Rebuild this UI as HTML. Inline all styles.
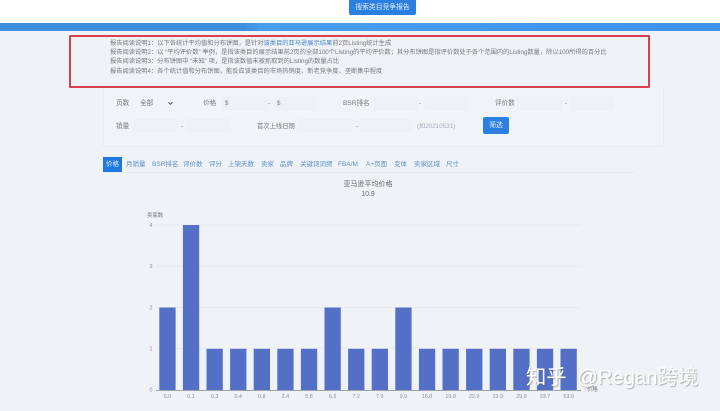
<!DOCTYPE html>
<html lang="zh">
<head>
<meta charset="utf-8">
<style>
html,body{margin:0;padding:0;width:720px;height:411px;overflow:hidden;background:#eff3f7}
body{position:relative;font-family:"Liberation Sans","Noto Sans CJK SC",sans-serif;color:#777}
#wrap{position:absolute;left:0;top:0;width:720px;height:411px;filter:blur(.35px)}
#top{position:absolute;left:0;top:0;width:720px;height:23px;background:#fff}
#band{position:absolute;left:0;top:23px;width:720px;height:8px;background:linear-gradient(90deg,#3f8fdf 0,#3f8fdf 34%,#4a9cec 36%,#3f93e8 100%)}
.t{position:absolute;white-space:nowrap;font-size:6.25px;line-height:9px}
#btn{position:absolute;left:349px;top:0;width:67px;height:15px;background:#2b7fe0;border-radius:0 0 2px 2px;color:#e8f1fb;font-size:6.8px;line-height:15px;text-align:center}
#red{position:absolute;left:69px;top:35px;width:577px;height:49px;border:2px solid #d9404a;border-radius:1px;z-index:2}
#panel{position:absolute;left:103px;top:86px;width:559px;height:60px;background:#f0f4f8;border-right:1px solid #e8edf2;border-bottom:1px solid #e8edf2;border-left:1px solid #e8edf2}
.in{position:absolute;height:13px;background:#eef2f6;border:1px solid #ecf0f4;box-sizing:border-box}
#go{position:absolute;left:483px;top:117px;width:26px;height:17px;background:#2b7fe0;border-radius:2px;color:#e8f1fb;font-size:6.8px;line-height:17px;text-align:center}
#act{position:absolute;left:103px;top:157px;width:19px;height:15px;background:#2078dc;color:#e8f1fb;font-size:6.6px;line-height:15px;text-align:center}
#ln{position:absolute;left:103px;top:172px;width:532px;height:1px;background:#e6ebf0}
.b{color:#5b8fcb;font-size:6.5px}
#wm{position:absolute;left:526px;top:364px;white-space:nowrap;color:#fff;font-size:20.3px;line-height:28px;word-spacing:5px;text-shadow:1px 1px 1px rgba(90,90,90,.45)}
svg{position:absolute;left:0;top:0}
</style>
</head>
<body>
<div id="wrap">
<div id="top"></div>
<div id="band"></div>
<div id="btn">搜索类目竞争报告</div>

<div id="red"></div>
<div class="t" style="left:110px;top:39px">报告阅读说明1：以下各统计平均值和分布饼图，是针对<span style="color:#4a86c8">该类目的亚马逊展示结果</span>前2页Listing统计生成</div>
<div class="t" style="left:110px;top:48px">报告阅读说明2：以 “平均评价数” 举例，是指该类目的展示结果前2页的全部100个Listing的平均评价数；其分布饼图是指评价数处于各个范围内的Listing数量，除以100所得的百分比</div>
<div class="t" style="left:110px;top:57px">报告阅读说明3：分布饼图中 “未知” 项，是指该数值未被抓取到的Listing的数量占比</div>
<div class="t" style="left:110px;top:67px">报告阅读说明4：各个统计值和分布饼图，能反应该类目的市场热销度、新老竞争度、垄断集中程度</div>

<div id="panel"></div>
<div class="t" style="left:116px;top:99px;font-size:6.6px">页数</div>
<div class="t" style="left:140px;top:99px;font-size:6.6px">全部</div>
<svg width="720" height="411"><path d="M168.5 102.3l2 2 2-2" fill="none" stroke="#555" stroke-width="1"/></svg>
<div class="t" style="left:203px;top:99px;font-size:6.6px">价格</div>
<div class="in" style="left:222px;top:97px;width:45px"></div>
<div class="t" style="left:225px;top:99px">$</div>
<div class="t" style="left:268px;top:99px">-</div>
<div class="in" style="left:274px;top:97px;width:42px"></div>
<div class="t" style="left:277px;top:99px">$</div>
<div class="t" style="left:343px;top:99px;font-size:6.6px">BSR排名</div>
<div class="in" style="left:373px;top:97px;width:44px"></div>
<div class="t" style="left:419px;top:99px">-</div>
<div class="in" style="left:425px;top:97px;width:43px"></div>
<div class="t" style="left:495px;top:99px;font-size:6.6px">评价数</div>
<div class="in" style="left:517px;top:97px;width:45px"></div>
<div class="t" style="left:565px;top:99px">-</div>
<div class="in" style="left:571px;top:97px;width:43px"></div>

<div class="t" style="left:116px;top:122px;font-size:6.6px">销量</div>
<div class="in" style="left:133px;top:119px;width:44px"></div>
<div class="t" style="left:181px;top:122px">-</div>
<div class="in" style="left:187px;top:119px;width:43px"></div>
<div class="t" style="left:257px;top:122px;font-size:6.3px">首次上线日期</div>
<div class="in" style="left:298px;top:119px;width:54px"></div>
<div class="t" style="left:356px;top:122px">-</div>
<div class="in" style="left:359px;top:119px;width:53px"></div>
<div class="t" style="left:417px;top:122px;color:#aab">(如20210531)</div>
<div id="go">筛选</div>

<div id="act">价格</div>
<div id="ln"></div>
<div class="t b" style="left:126px;top:160px">月销量</div>
<div class="t b" style="left:152px;top:160px">BSR排名</div>
<div class="t b" style="left:183px;top:160px">评价数</div>
<div class="t b" style="left:209px;top:160px">评分</div>
<div class="t b" style="left:228px;top:160px">上架天数</div>
<div class="t b" style="left:261px;top:160px">卖家</div>
<div class="t b" style="left:280px;top:160px">品牌</div>
<div class="t b" style="left:300px;top:160px">关键词词频</div>
<div class="t b" style="left:338px;top:160px">FBA/M</div>
<div class="t b" style="left:366px;top:160px">A+页面</div>
<div class="t b" style="left:394px;top:160px">变体</div>
<div class="t b" style="left:414px;top:160px">卖家区域</div>
<div class="t b" style="left:446px;top:160px">尺寸</div>

<div class="t" style="left:268px;width:200px;text-align:center;top:180px;font-size:7px;color:#666">亚马逊平均价格</div>
<div class="t" style="left:268px;width:200px;text-align:center;top:190px;font-size:7px;color:#666">10.9</div>

<svg width="720" height="411" font-family="'Liberation Sans','Noto Sans CJK SC',sans-serif" font-size="5.4" fill="#8a8f98">
<g stroke="#e7ebf0" stroke-width="1">
<line x1="156" y1="225" x2="581" y2="225"/>
<line x1="156" y1="266.5" x2="581" y2="266.5"/>
<line x1="156" y1="307.5" x2="581" y2="307.5"/>
<line x1="156" y1="348.5" x2="581" y2="348.5"/>
</g>
<g fill="#5470c6">
<rect x="159.3" y="307.5" width="16.3" height="82.5"/>
<rect x="182.9" y="225" width="16.3" height="165"/>
<rect x="206.5" y="348.8" width="16.3" height="41.2"/>
<rect x="230.1" y="348.8" width="16.3" height="41.2"/>
<rect x="253.7" y="348.8" width="16.3" height="41.2"/>
<rect x="277.3" y="348.8" width="16.3" height="41.2"/>
<rect x="300.9" y="348.8" width="16.3" height="41.2"/>
<rect x="324.5" y="307.5" width="16.3" height="82.5"/>
<rect x="348.1" y="348.8" width="16.3" height="41.2"/>
<rect x="371.7" y="348.8" width="16.3" height="41.2"/>
<rect x="395.3" y="307.5" width="16.3" height="82.5"/>
<rect x="418.9" y="348.8" width="16.3" height="41.2"/>
<rect x="442.5" y="348.8" width="16.3" height="41.2"/>
<rect x="466.1" y="348.8" width="16.3" height="41.2"/>
<rect x="489.7" y="348.8" width="16.3" height="41.2"/>
<rect x="513.3" y="348.8" width="16.3" height="41.2"/>
<rect x="536.9" y="348.8" width="16.3" height="41.2"/>
<rect x="560.5" y="348.8" width="16.3" height="41.2"/>
</g>
<line x1="156" y1="390.3" x2="581" y2="390.3" stroke="#6e7079" stroke-width=".7"/>
<g text-anchor="end">
<text x="152.5" y="227">4</text>
<text x="152.5" y="268">3</text>
<text x="152.5" y="309.5">2</text>
<text x="152.5" y="350.5">1</text>
<text x="152.5" y="391.5">0</text>
</g>
<text x="147" y="217" fill="#777">卖家数</text>
<text x="587" y="391" fill="#777">价格</text>
<g text-anchor="middle">
<text x="167.4" y="398">0.0</text>
<text x="191" y="398">0.1</text>
<text x="214.6" y="398">0.3</text>
<text x="238.2" y="398">0.4</text>
<text x="261.8" y="398">0.8</text>
<text x="285.4" y="398">2.4</text>
<text x="309" y="398">5.8</text>
<text x="332.6" y="398">6.9</text>
<text x="356.2" y="398">7.2</text>
<text x="379.8" y="398">7.9</text>
<text x="403.4" y="398">9.9</text>
<text x="427" y="398">16.8</text>
<text x="450.6" y="398">19.9</text>
<text x="474.2" y="398">22.9</text>
<text x="497.8" y="398">23.9</text>
<text x="521.4" y="398">29.9</text>
<text x="545" y="398">33.7</text>
<text x="568.6" y="398">53.9</text>
</g>
</svg>

<div id="wm">知乎 @Regan跨境</div>
</div>
</body>
</html>
